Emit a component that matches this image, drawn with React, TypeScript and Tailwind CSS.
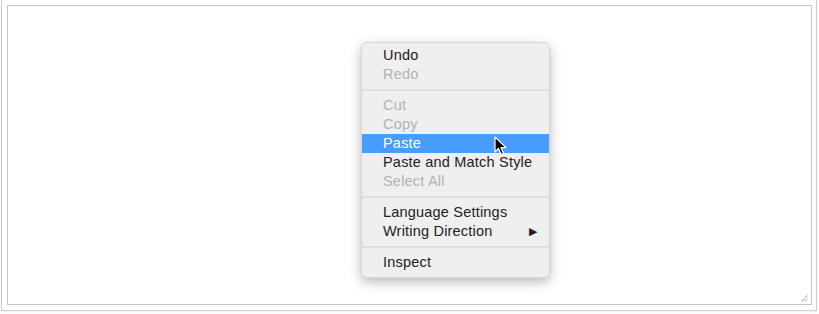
import React from "react";

type Item =
  | { kind: "item"; label: string; disabled?: boolean; active?: boolean; submenu?: boolean }
  | { kind: "sep" };

const items: Item[] = [
  { kind: "item", label: "Undo" },
  { kind: "item", label: "Redo", disabled: true },
  { kind: "sep" },
  { kind: "item", label: "Cut", disabled: true },
  { kind: "item", label: "Copy", disabled: true },
  { kind: "item", label: "Paste", active: true },
  { kind: "item", label: "Paste and Match Style" },
  { kind: "item", label: "Select All", disabled: true },
  { kind: "sep" },
  { kind: "item", label: "Language Settings" },
  { kind: "item", label: "Writing Direction", submenu: true },
  { kind: "sep" },
  { kind: "item", label: "Inspect" },
];

const Cursor = () => (
  <svg width="14" height="20" viewBox="0 0 14 20" className="absolute left-[132px] top-[93px]">
    <path
      d="M1 1 L1 16 L4.5 12.5 L7.2 18.6 L9.6 17.6 L7 11.6 L12 11.6 Z"
      fill="#000"
      stroke="#fff"
      strokeWidth="1.2"
      strokeLinejoin="round"
    />
  </svg>
);

const ContextMenu = () => (
  <div className="absolute left-[353px] top-[36px] w-[189px] rounded-[6px] bg-[#efefef] border border-[#d6d6d6] pt-[3px] pb-[5px] shadow-[0_4px_12px_rgba(0,0,0,0.28)] font-['Liberation_Sans',Arial,sans-serif] text-[14.5px] tracking-[0.2px]">
    {items.map((it, i) =>
      it.kind === "sep" ? (
        <div key={i} className="h-[12px] flex items-center">
          <div className="h-[2px] w-full bg-[#dedede]" />
        </div>
      ) : (
        <div
          key={i}
          className={`h-[19px] flex items-center justify-between pl-[21px] pr-[12px] leading-none ${
            it.active ? "bg-[#4a9bfe] text-white" : it.disabled ? "text-[#b2b2b2]" : "text-[#222]"
          }`}
        >
          <span>{it.label}</span>
          {it.submenu && <span className="text-[11px] text-[#222]">▶</span>}
        </div>
      )
    )}
    <Cursor />
  </div>
);

export default function App() {
  return (
    <div className="w-[819px] h-[314px] bg-white">
      <div className="ml-[1px] w-[816px] h-[311px] border-x border-b border-[#cfcfcf] pl-[5px] pr-[4px] pt-[5px] pb-[5px] shadow-[0_1px_2px_rgba(0,0,0,0.08)]">
        <div className="relative w-full h-full border border-[#c4c4c4] bg-white">
          <ContextMenu />
          <svg width="8" height="8" viewBox="0 0 8 8" className="absolute right-[2px] bottom-[2px]">
            <path d="M1 7 L7 1 M4 7 L7 4" stroke="#777" strokeWidth="1" strokeDasharray="1 1" />
          </svg>
        </div>
      </div>
    </div>
  );
}
